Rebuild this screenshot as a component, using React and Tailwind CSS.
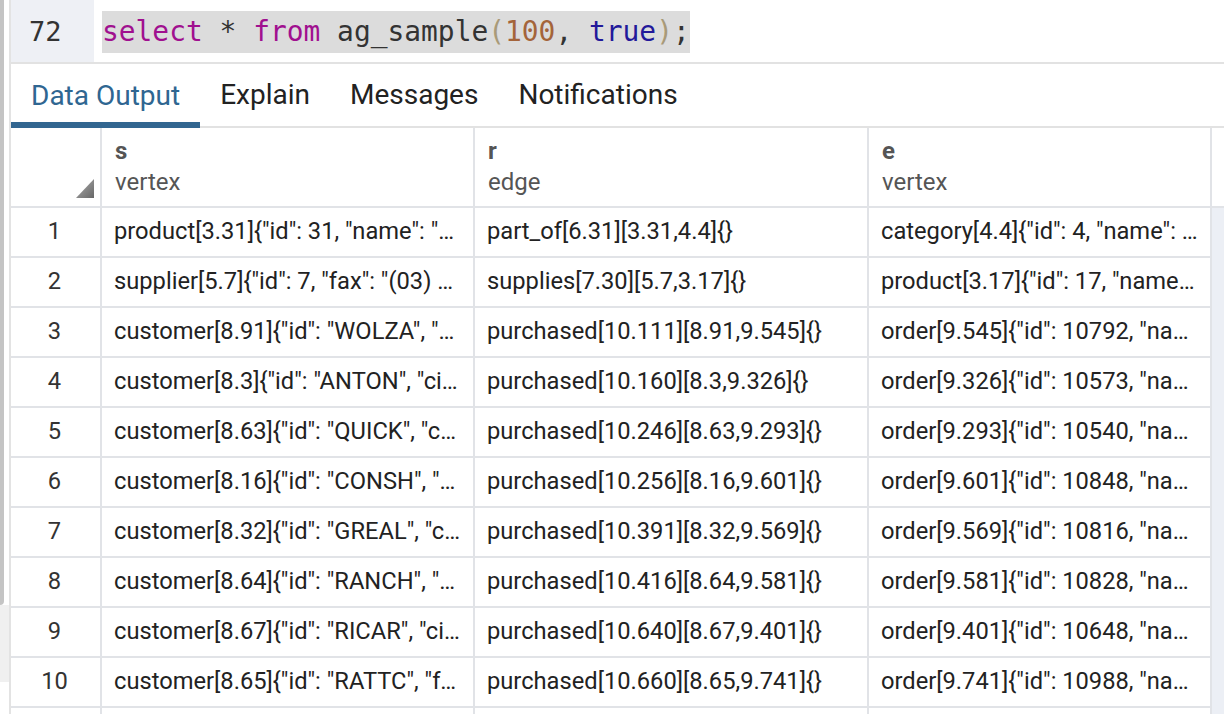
import React from 'react';

const rows = [
  ['product[3.31]{"id": 31, "name": "…', 'part_of[6.31][3.31,4.4]{}', 'category[4.4]{"id": 4, "name": …'],
  ['supplier[5.7]{"id": 7, "fax": "(03) …', 'supplies[7.30][5.7,3.17]{}', 'product[3.17]{"id": 17, "name…'],
  ['customer[8.91]{"id": "WOLZA", "…', 'purchased[10.111][8.91,9.545]{}', 'order[9.545]{"id": 10792, "na…'],
  ['customer[8.3]{"id": "ANTON", "ci…', 'purchased[10.160][8.3,9.326]{}', 'order[9.326]{"id": 10573, "na…'],
  ['customer[8.63]{"id": "QUICK", "c…', 'purchased[10.246][8.63,9.293]{}', 'order[9.293]{"id": 10540, "na…'],
  ['customer[8.16]{"id": "CONSH", "…', 'purchased[10.256][8.16,9.601]{}', 'order[9.601]{"id": 10848, "na…'],
  ['customer[8.32]{"id": "GREAL", "c…', 'purchased[10.391][8.32,9.569]{}', 'order[9.569]{"id": 10816, "na…'],
  ['customer[8.64]{"id": "RANCH", "…', 'purchased[10.416][8.64,9.581]{}', 'order[9.581]{"id": 10828, "na…'],
  ['customer[8.67]{"id": "RICAR", "ci…', 'purchased[10.640][8.67,9.401]{}', 'order[9.401]{"id": 10648, "na…'],
  ['customer[8.65]{"id": "RATTC", "f…', 'purchased[10.660][8.65,9.741]{}', 'order[9.741]{"id": 10988, "na…'],
];

const cols = [
  { name: 's', type: 'vertex' },
  { name: 'r', type: 'edge' },
  { name: 'e', type: 'vertex' },
];

const grid = 'grid grid-cols-[91px_373px_394px_343px_1fr]';
const cell = 'border-r-2 border-b-2 border-[#e1e3e7] overflow-hidden whitespace-nowrap';

const App = () => {
  return (
    <div className="w-[1224px] h-[714px] overflow-hidden bg-white flex text-[#222]" style={{ fontFamily: 'Roboto, "Liberation Sans", sans-serif' }}>
      {/* scrollbar strip */}
      <div className="w-[9px] shrink-0 flex flex-col">
        <div className="w-[4px] h-[605px] bg-[#c4c4c4] rounded-br-[4px]" />
        <div className="w-[9px] h-[77px] bg-[#f0f0f0]" />
      </div>
      <div className="flex-1 border-l-2 border-[#e3e3e3] flex flex-col min-w-0">
        {/* editor line */}
        <div className="h-[64px] flex border-b-2 border-[#e2e2e2] shrink-0">
          <div className="w-[83px] bg-[#eef0f5] flex items-center pl-[18px] pt-[2px] text-[27px] text-[#333]" style={{ fontFamily: '"DejaVu Sans Mono", monospace' }}>
            72
          </div>
          <div className="flex items-center pl-[8px] pt-[2px]">
            <div className="h-[42px] bg-[#dcdcdc] flex items-center text-[27.9px] leading-none whitespace-pre" style={{ fontFamily: '"DejaVu Sans Mono", monospace' }}>
              <span className="text-[#a0108f]">select</span>
              <span className="text-[#333]"> * </span>
              <span className="text-[#a0108f]">from</span>
              <span className="text-[#333]"> ag_sample</span>
              <span className="text-[#a99a78]">(</span>
              <span className="text-[#a4643a]">100</span>
              <span className="text-[#333]">, </span>
              <span className="text-[#22199a]">true</span>
              <span className="text-[#a99a78]">)</span>
              <span className="text-[#333]">;</span>
            </div>
          </div>
        </div>
        {/* tabs */}
        <div className="h-[64px] flex border-b-2 border-[#e2e2e2] shrink-0 text-[28px]">
          <div className="px-[20px] flex items-center text-[#2f6691] border-b-[6px] border-[#326690] mb-[-2px] pt-[6px]">Data Output</div>
          <div className="px-[20px] flex items-center text-[#222]">Explain</div>
          <div className="px-[20px] flex items-center text-[#222]">Messages</div>
          <div className="px-[20px] flex items-center text-[#222]">Notifications</div>
        </div>
        {/* table */}
        <div className="flex-1">
          <div className={`${grid} h-[80px]`}>
            <div className={`${cell} relative`}>
              <svg className="absolute right-[6px] bottom-[8px]" width="18" height="19" viewBox="0 0 18 19">
                <defs>
                  <linearGradient id="tri" x1="0" y1="0" x2="1" y2="1">
                    <stop offset="0" stopColor="#b0b0b0" />
                    <stop offset="1" stopColor="#666" />
                  </linearGradient>
                </defs>
                <polygon points="18,0 18,19 0,19" fill="url(#tri)" />
              </svg>
            </div>
            {cols.map((c, i) => (
              <div key={i} className={`${cell} pl-[13px] flex flex-col justify-center text-[#555] text-[24px] leading-[31px]`}>
                <span className="font-bold">{c.name}</span>
                <span>{c.type}</span>
              </div>
            ))}
            <div className="border-b-2 border-[#e1e3e7]" />
          </div>
          {rows.map((r, i) => (
            <div key={i} className={`${grid} h-[50px] text-[23.7px]`}>
              <div className={`${cell} flex items-center justify-center text-[#333] pr-[2px]`}>{i + 1}</div>
              {r.map((v, j) => (
                <div key={j} className={`${cell} flex items-center pl-[12px]`}>{v}</div>
              ))}
              <div className="bg-[#eceff5]" />
            </div>
          ))}
          <div className={`${grid} h-[50px]`}>
            <div className="border-r-2 border-[#e1e3e7]" />
            <div className="border-r-2 border-[#e1e3e7]" />
            <div className="border-r-2 border-[#e1e3e7]" />
            <div className="border-r-2 border-[#e1e3e7]" />
            <div className="bg-[#eceff5]" />
          </div>
        </div>
      </div>
    </div>
  );
};

export default App;
